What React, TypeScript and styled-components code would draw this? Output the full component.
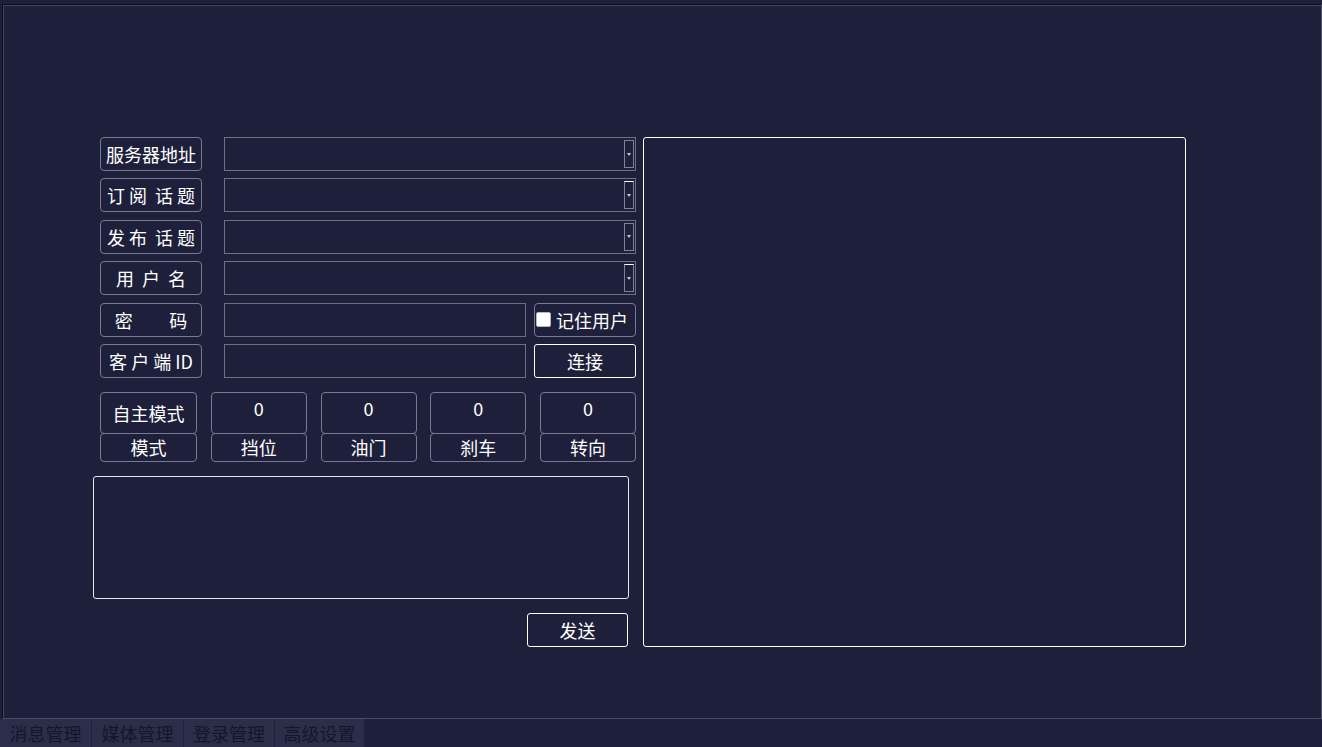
import React from 'react';
import styled, {createGlobalStyle} from 'styled-components';

const GlobalStyle = createGlobalStyle`
  html, body {
    margin: 0;
    padding: 0;
    background: #1e1f3b;
    height: 747px;
    overflow: hidden;
  }
  * {
    box-sizing: border-box;
  }
  body {
    font-family: "Noto Sans CJK SC", "Noto Sans", sans-serif;
    color: #ffffff;
  }
`

const Page = styled.div`
  display: flex;
  flex-direction: column;
  padding: 4px 0 0 2px;
  height: 747px;
`
const Frame = styled.div`
  height: 716px;
  width: 1320px;
  border-top: 1px solid #0c0c16;
  border-left: 1px solid #0c0c16;
  border-right: 1px solid #50526a;
  border-bottom: 1px solid #4a4c66;
  box-shadow: inset 1px 1px 0 #44465e;
  padding: 132px 0 0 90px;
  display: flex;
  gap: 7px;
`
const LeftColumn = styled.div`
  width: 543px;
  display: flex;
  flex-direction: column;
`
const Form = styled.div`
  padding-left: 7px;
  display: flex;
  flex-direction: column;
  gap: 7.4px;
`
const Row = styled.div`
  display: flex;
  height: 34px;
`
const Label = styled.div`
  width: 102px;
  height: 100%;
  border: 1px solid #767a8e;
  border-radius: 4px;
  display: flex;
  align-items: center;
  justify-content: center;
  font-size: 18px;
  white-space: pre;
  margin-right: 22px;
`
const Combo = styled.div`
  position: relative;
  width: 412px;
  height: 100%;
  border: 1px solid #6c7083;
`
type DropButtonType = {
  lit?: boolean;
}
const DropButton = styled.div<DropButtonType>`
  position: absolute;
  right: 1px;
  top: 2px;
  bottom: 2px;
  width: 10px;
  border: 1px solid #7e8294;
  border-top-color: ${props => props.lit ? '#ffffff' : '#7e8294'};
  display: flex;
  align-items: center;
  justify-content: center;
  &::after {
    content: '';
    border-left: 2px solid transparent;
    border-right: 2px solid transparent;
    border-top: 3px solid #c8c9d2;
  }
`
const Input = styled.div`
  width: 302px;
  height: 100%;
  border: 1px solid #6c7083;
  margin-right: 8px;
`
const CheckGroup = styled.div`
  width: 102px;
  height: 100%;
  border: 1px solid #767a8e;
  border-radius: 4px;
  display: flex;
  align-items: center;
  gap: 5px;
  padding-left: 1px;
  font-size: 18px;
`
const CheckBox = styled.span`
  width: 15px;
  height: 15px;
  background: #ffffff;
  border-radius: 2px;
  border: 1px solid #b8b8c4;
`
const Button = styled.div`
  width: 102px;
  height: 100%;
  border: 1px solid #ffffff;
  border-radius: 3px;
  display: flex;
  align-items: center;
  justify-content: center;
  font-size: 18px;
`
const StatusGrid = styled.div`
  display: grid;
  grid-template-columns: 97px repeat(4, 96px);
  column-gap: 13.75px;
  margin: 14px 0 0 7px;
`
const StatusCell = styled.div`
  display: flex;
  flex-direction: column;
`
type StatusBoxType = {
  small?: boolean;
}
const StatusBox = styled.div<StatusBoxType>`
  height: ${props => props.small ? '29px' : '42px'};
  margin-top: ${props => props.small ? '-1px' : '0'};
  border: 1px solid #767a8e;
  border-radius: 4px;
  display: flex;
  align-items: ${props => props.small ? 'center' : 'flex-start'};
  justify-content: center;
  padding-top: ${props => props.small ? '0' : '3px'};
  font-size: 18px;
  line-height: 24px;
`
const ModeBox = styled(StatusBox)`
  align-items: center;
  padding-top: 0;
`
const MessageBox = styled.div`
  width: 536px;
  height: 123px;
  margin-top: 14px;
  border: 1px solid #e6e6ec;
  border-radius: 3px;
`
const SendButton = styled(Button)`
  width: 101px;
  height: 34px;
  margin: 14px 0 0 434px;
  border-radius: 3px;
`
const LogPanel = styled.div`
  width: 543px;
  height: 510px;
  border: 1px solid #ffffff;
  border-radius: 3px;
`
const TabBar = styled.div`
  display: flex;
  height: 28px;
  margin-left: -2px;
`
type TabType = {
  w: number;
}
const Tab = styled.div<TabType>`
  width: ${props => props.w}px;
  height: 100%;
  background: #2c2d49;
  border-right: 1px solid #1e1f3b;
  display: flex;
  align-items: center;
  justify-content: center;
  font-size: 18px;
  color: #14152a;
`

const App = () => {
  const combos = [
    {label: '服务器地址', lit: false},
    {label: '订 阅  话 题', lit: true},
    {label: '发 布  话 题', lit: false},
    {label: '用  户  名', lit: true},
  ]
  const status = [
    {name: '挡位', value: 0},
    {name: '油门', value: 0},
    {name: '刹车', value: 0},
    {name: '转向', value: 0},
  ]
  const tabs = [
    {name: '消息管理', w: 92},
    {name: '媒体管理', w: 92},
    {name: '登录管理', w: 91},
    {name: '高级设置', w: 90},
  ]

  return (
    <>
      <GlobalStyle/>
      <Page>
        <Frame>
          <LeftColumn>
            <Form>
              {combos.map((c) => (
                <Row key={c.label}>
                  <Label>{c.label}</Label>
                  <Combo>
                    <DropButton lit={c.lit}/>
                  </Combo>
                </Row>
              ))}
              <Row>
                <Label>{'密         码'}</Label>
                <Input/>
                <CheckGroup>
                  <CheckBox/>
                  记住用户
                </CheckGroup>
              </Row>
              <Row>
                <Label>{'客 户 端 ID'}</Label>
                <Input/>
                <Button>连接</Button>
              </Row>
            </Form>
            <StatusGrid>
              <StatusCell>
                <ModeBox>自主模式</ModeBox>
                <StatusBox small>模式</StatusBox>
              </StatusCell>
              {status.map((s) => (
                <StatusCell key={s.name}>
                  <StatusBox>{s.value}</StatusBox>
                  <StatusBox small>{s.name}</StatusBox>
                </StatusCell>
              ))}
            </StatusGrid>
            <MessageBox/>
            <SendButton>发送</SendButton>
          </LeftColumn>
          <LogPanel/>
        </Frame>
        <TabBar>
          {tabs.map((t) => (
            <Tab key={t.name} w={t.w}>{t.name}</Tab>
          ))}
        </TabBar>
      </Page>
    </>
  );
};

export default App;
